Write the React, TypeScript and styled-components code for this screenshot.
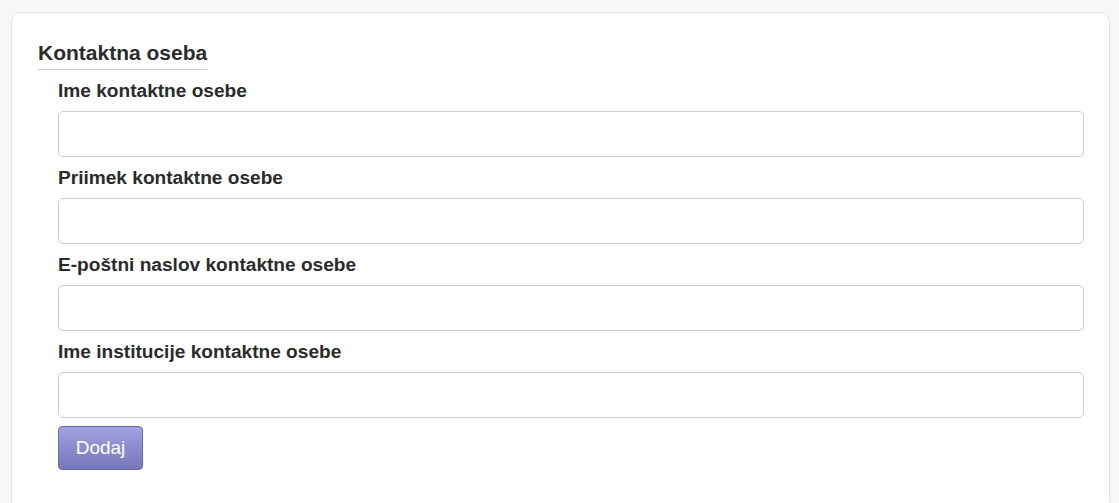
import React from "react";
import styled, { createGlobalStyle } from "styled-components";

const GlobalStyle = createGlobalStyle`
  html, body { margin: 0; padding: 0; background: #f7f7f7; }
  body { font-family: "Liberation Sans", Arial, sans-serif; color: #333; }
`;

const Page = styled.div`
  padding: 12px 9px 0 11px;
  height: 491px;
  overflow: hidden;
`;

const Card = styled.div`
  background: #fff;
  border: 1px solid #e2e2e2;
  border-radius: 10px;
  padding: 28px 25px 40px 26px;
  min-height: 480px;
  box-sizing: border-box;
`;

const Legend = styled.div`
  display: inline-block;
  font-size: 21px;
  line-height: 24px;
  font-weight: bold;
  color: #2b2b2b;
  padding-bottom: 4px;
  border-bottom: 1px solid #cfcfcf;
`;

const Fields = styled.div`
  margin-left: 20px;
  display: flex;
  flex-direction: column;
  align-items: flex-start;
`;

const Group = styled.div`
  width: 100%;
  margin-top: 10px;
  display: flex;
  flex-direction: column;
`;

const Label = styled.label`
  font-size: 19.1px;
  line-height: 22px;
  font-weight: bold;
  color: #2b2b2b;
  margin-bottom: 9px;
`;

const Input = styled.input`
  height: 46px;
  box-sizing: border-box;
  width: 100%;
  border: 1px solid #cccccc;
  border-radius: 5px;
  background: #fff;
  padding: 0 10px;
  font-family: inherit;
  font-size: 16px;
  outline: none;
`;

const Button = styled.button`
  margin-top: 8px;
  width: 85px;
  height: 44px;
  border: 1px solid #6b6bab;
  border-radius: 4px;
  background: linear-gradient(to bottom, #a1a2e2, #7676ba);
  color: #fff;
  font-family: "Liberation Sans", Arial, sans-serif;
  font-size: 19px;
  padding: 0;
  cursor: pointer;
`;

const fields = [
  "Ime kontaktne osebe",
  "Priimek kontaktne osebe",
  "E-poštni naslov kontaktne osebe",
  "Ime institucije kontaktne osebe",
];

export default function App() {
  return (
    <>
      <GlobalStyle />
      <Page>
        <Card>
          <Legend>Kontaktna oseba</Legend>
          <Fields>
            {fields.map((f) => (
              <Group key={f}>
                <Label>{f}</Label>
                <Input type="text" />
              </Group>
            ))}
            <Button type="button">Dodaj</Button>
          </Fields>
        </Card>
      </Page>
    </>
  );
}
